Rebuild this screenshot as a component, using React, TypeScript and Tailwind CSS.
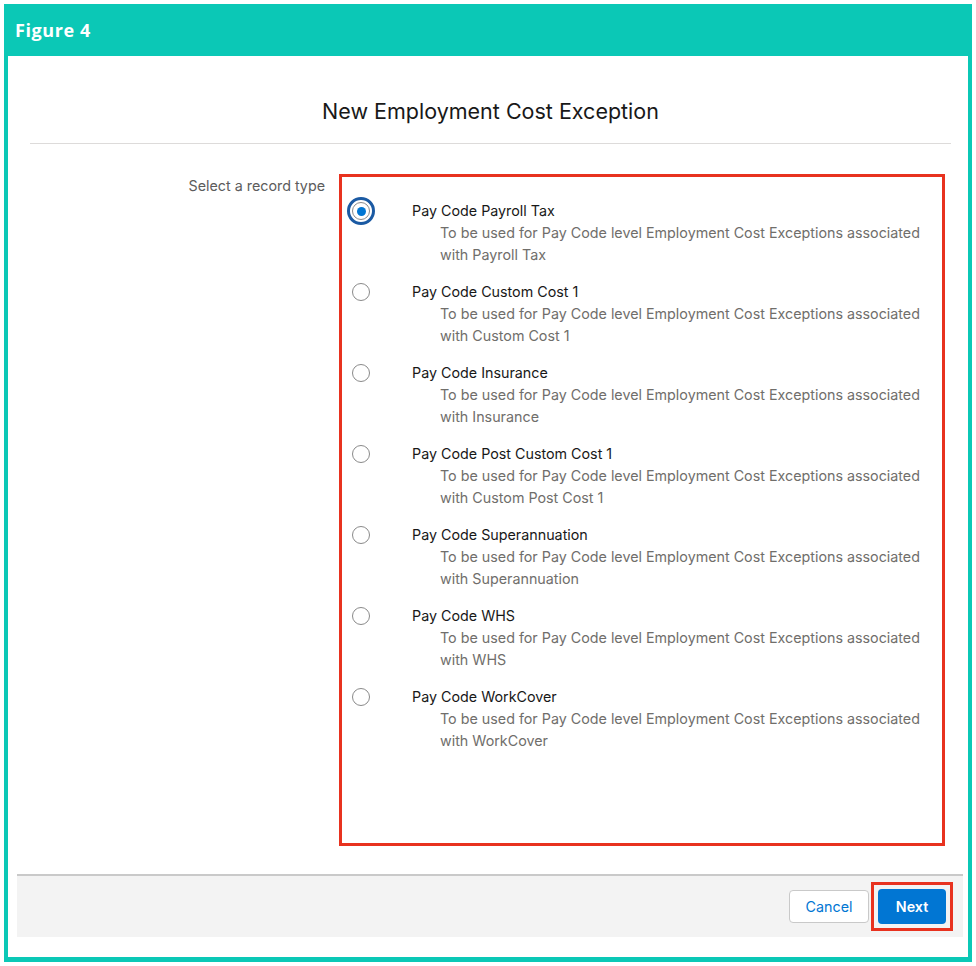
import React from "react";

const RECORD_TYPES = [
  { name: "Pay Code Payroll Tax", suffix: "Payroll Tax" },
  { name: "Pay Code Custom Cost 1", suffix: "Custom Cost 1" },
  { name: "Pay Code Insurance", suffix: "Insurance" },
  { name: "Pay Code Post Custom Cost 1", suffix: "Custom Post Cost 1" },
  { name: "Pay Code Superannuation", suffix: "Superannuation" },
  { name: "Pay Code WHS", suffix: "WHS" },
  { name: "Pay Code WorkCover", suffix: "WorkCover" },
];

const Radio: React.FC<{ checked: boolean }> = ({ checked }) => {
  if (checked) {
    return (
      <span className="flex h-7 w-7 items-center justify-center rounded-full border-[3px] border-[#1b5aa3]">
        <span className="flex h-[18px] w-[18px] items-center justify-center rounded-full border border-[#8a8a8a] bg-white">
          <span className="h-[9px] w-[9px] rounded-full bg-[#0176d3]" />
        </span>
      </span>
    );
  }
  return <span className="h-[18px] w-[18px] rounded-full border border-[#8a8a8a] bg-white" />;
};

export default function App() {
  const [selected, setSelected] = React.useState(0);

  return (
    <div className="h-[966px] w-[976px] bg-white p-1 font-['Inter',sans-serif]">
      <div className="flex h-full flex-col">
        <div className="flex h-[52px] items-center bg-[#0bc8b6] px-[11px]">
          <span className="font-['Open_Sans',sans-serif] text-[18px] font-bold tracking-[0.6px] text-white">
            Figure 4
          </span>
        </div>

        <div className="flex flex-1 flex-col border-x-4 border-b-[5px] border-[#0bc8b6] bg-white">
          <div className="ml-[22px] mr-[17px] border-b border-[#dddbda] pb-[18px] pt-[41px] text-center">
            <h1 className="text-[21.5px] leading-7 text-[#181818]">New Employment Cost Exception</h1>
          </div>

          <div className="mt-[30px] flex">
            <div className="w-[331px] pr-[14px] pt-[2px] text-right text-[14.3px] leading-5 text-[#5c5c5c]">
              Select a record type
            </div>
            <div className="h-[672px] w-[606px] border-[3px] border-[#e8321f] pl-[5px] pt-[23px]">
              <div className="flex flex-col gap-[15px]">
                {RECORD_TYPES.map((rt, i) => (
                  <div
                    key={rt.name}
                    className="flex cursor-pointer items-start"
                    onClick={() => setSelected(i)}
                  >
                    <div className="flex h-[22px] w-7 items-center justify-center">
                      <Radio checked={selected === i} />
                    </div>
                    <div className="ml-[37px] text-[14.3px] leading-[22px]">
                      <div className="text-[#181818]">{rt.name}</div>
                      <div className="pl-7 text-[#706e6b]">
                        To be used for Pay Code level Employment Cost Exceptions associated
                        <br />
                        with {rt.suffix}
                      </div>
                    </div>
                  </div>
                ))}
              </div>
            </div>
          </div>

          <div className="ml-[9px] mr-[5px] mt-[28px] flex h-[63px] items-center justify-end gap-[2px] border-t-2 border-[#c9c9c9] bg-[#f3f3f3] pr-[10px]">
            <button className="h-[33px] w-[80px] rounded-[4px] border border-[#c9c9c9] bg-white text-[14.3px] text-[#0176d3]">
              Cancel
            </button>
            <div className="border-[3px] border-[#e8321f] p-1">
              <button className="h-[35px] w-[68px] rounded-[4px] bg-[#0176d3] text-[14.3px] font-semibold text-white">
                Next
              </button>
            </div>
          </div>
        </div>
      </div>
    </div>
  );
}
